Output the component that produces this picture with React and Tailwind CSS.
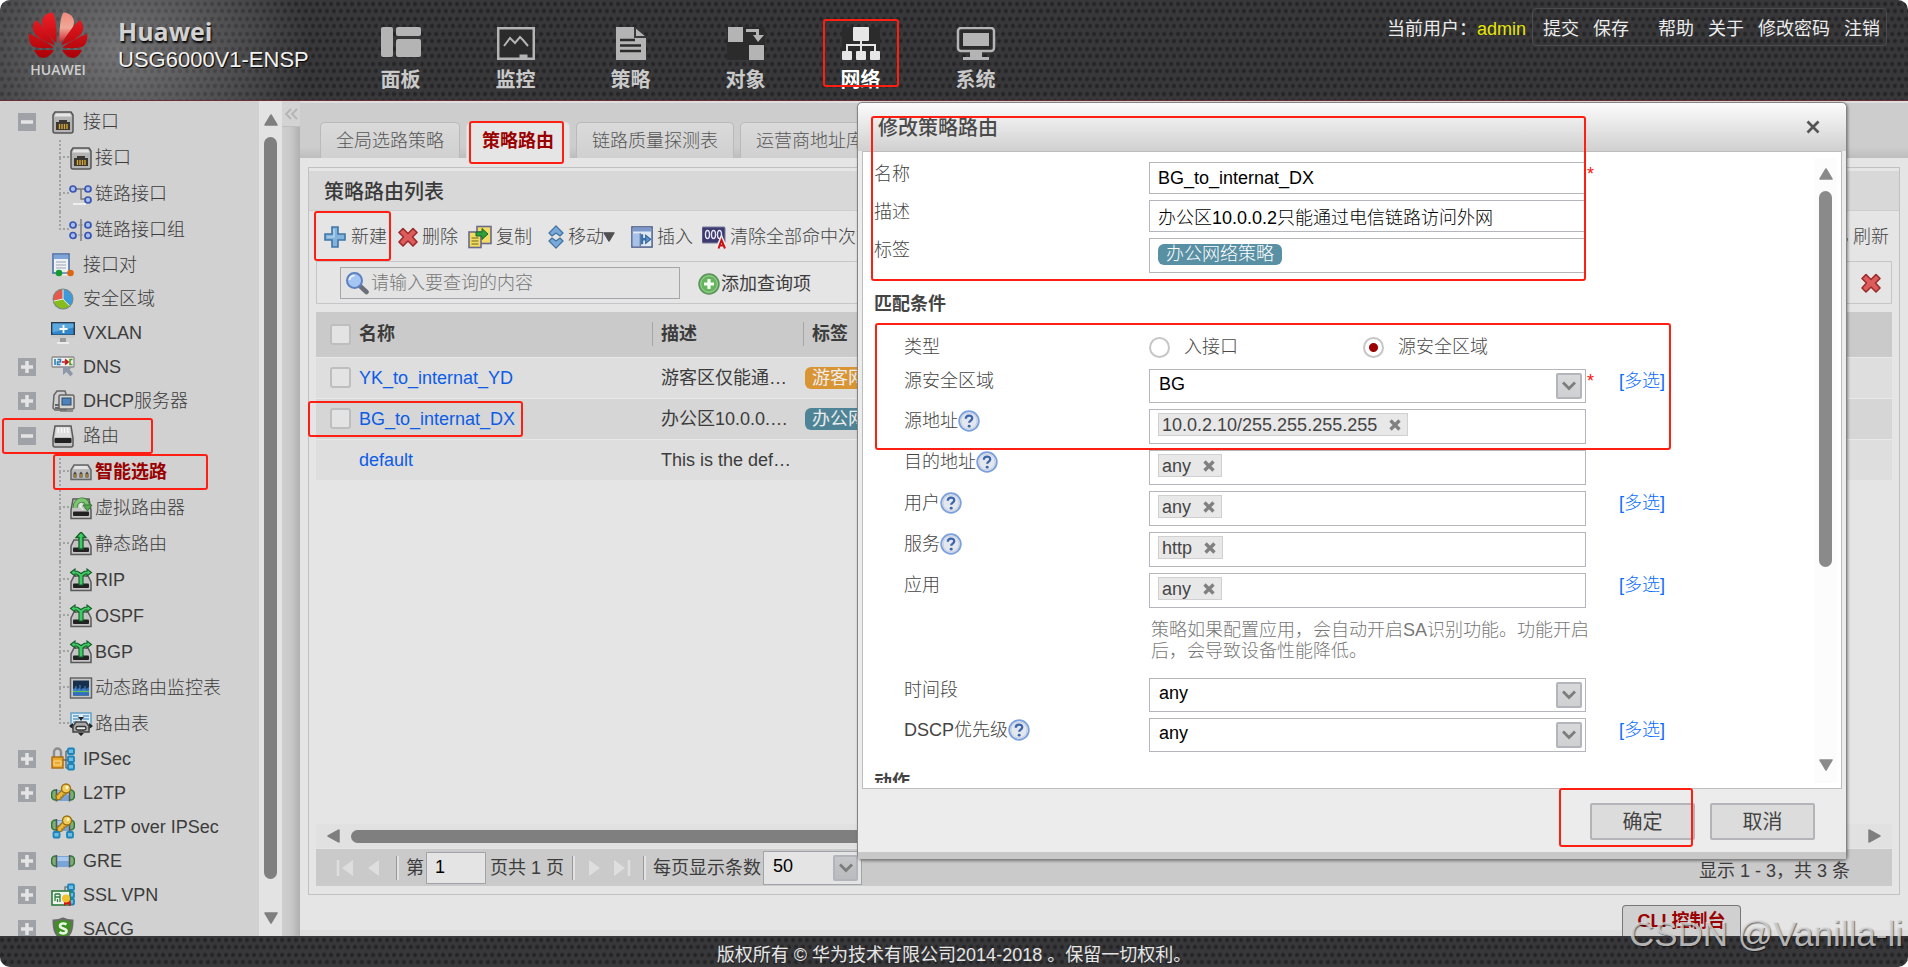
import React from "react";

const DOTS =
  "bg-[radial-gradient(circle_at_2px_4px,#242426_1px,transparent_3px),radial-gradient(circle_at_5px_11px,#242426_1px,transparent_3px)] bg-[size:7px_15px]";

/* ---------- annotation frame ---------- */
const Mark = ({ className }) => (
  <span aria-hidden="true" className={`pointer-events-none absolute z-20 rounded-[3px] border-2 border-[#ff1f12] ${className}`} />
);

/* ---------- tree icons ---------- */
const Svg = ({ children, className = "h-6 w-6", box = "0 0 24 24" }) => (
  <svg viewBox={box} className={`block shrink-0 ${className}`} aria-hidden="true" fill="none">
    {children}
  </svg>
);

const PortIcon = () => (
  <Svg>
    <path d="M4 2h16l2 3v16a2 2 0 0 1-2 2H4a2 2 0 0 1-2-2V5z" fill="#b4b4b4" stroke="#555" strokeWidth="1.5" />
    <path d="M5 3.500h14l1.500 3h-17z" fill="#e6e6e6" />
    <path d="M5 20v-8h3v-2h8v2h3v8z" fill="#3b3733" />
    <path d="M8.500 14v5M11 14v5M13.500 14v5M16 14v5" stroke="#d7a634" strokeWidth="1.400" />
  </Svg>
);
const Node = ({ x, y }) => <circle cx={x} cy={y} r="3" fill="#a9bdf0" stroke="#3a56b0" strokeWidth="1.700" />;
const LinkIcon = () => (
  <Svg>
    <path d="M6 7h12M12 7v10h6" stroke="#777" strokeWidth="1.400" />
    <Node x={4} y={7} /><Node x={19} y={7} /><Node x={19} y={18} />
    <path d="M4 22h13" stroke="#eee" strokeWidth="2" />
  </Svg>
);
const LinkGroupIcon = () => (
  <Svg>
    <path d="M6 7h13M6 17h13" stroke="#999" strokeWidth="1.200" strokeDasharray="2 1" />
    <path d="M12 1v22" stroke="#777" strokeWidth="1.400" />
    <Node x={4} y={7} /><Node x={19} y={7} /><Node x={4} y={17.500} /><Node x={19} y={17.500} />
  </Svg>
);
const PairIcon = () => (
  <Svg>
    <rect x="2" y="1" width="16" height="19" fill="#eef1f6" stroke="#4a70a8" strokeWidth="1.600" />
    <rect x="3" y="2" width="14" height="4" fill="#7fa4d8" />
    <path d="M5 9h10M5 12h10M5 15h10" stroke="#b6bcc6" strokeWidth="1.300" />
    <path d="M9 20h10" stroke="#eee" strokeWidth="5" />
    <path d="M8 20h12" stroke="#5577aa" strokeWidth="1.400" />
    <circle cx="8" cy="20" r="3.300" fill="#149a2e" /><circle cx="19.500" cy="20" r="3.300" fill="#dd6510" />
  </Svg>
);
const PieIcon = () => (
  <Svg>
    <circle cx="12" cy="12" r="10.500" fill="#7a8a80" />
    <path d="M12 12 2.800 14A9.500 9.500 0 0 1 11 2.500z" fill="#e5584a" />
    <path d="M12 12V2.500a9.500 9.500 0 0 1 6.500 16.300z" fill="#3d9adb" />
    <path d="M12 12l6.500 6.800A9.500 9.500 0 0 1 2.800 14z" fill="#86bd1c" />
    <path d="M12 2.500V12l6.500 6.800M12 12l-9.200 2" stroke="#e9efe9" />
  </Svg>
);
const VxlanIcon = () => (
  <Svg>
    <rect x="0" y="1" width="24" height="16" fill="#2b3b4b" />
    <rect x="1.500" y="2.500" width="21" height="11" fill="#2f86c8" />
    <path d="M1.500 2.500h21v4l-21 5z" fill="#5aa8dd" />
    <rect x="0" y="14" width="24" height="3" fill="#c9c9c9" />
    <path d="M9 17h6v4H9z" fill="#9a9a9a" /><path d="M6 22h12" stroke="#ececec" strokeWidth="2" />
    <path d="M12.500 4v8M8.500 8h8" stroke="#fff" strokeWidth="1.800" />
  </Svg>
);
const DnsIcon = () => (
  <Svg>
    <rect x="1" y="2" width="22" height="10" rx="1" fill="#f0f0f0" stroke="#8a8a8a" strokeWidth="1.300" />
    <path d="M4 4v6M6.500 4.500h3v2.500h-3v2.500h3" stroke="#2d7fb5" strokeWidth="1.600" />
    <path d="M11 7h5M14 4.500 17 7l-3 2.500" stroke="#c01818" strokeWidth="1.700" />
    <path d="M21.500 4.500h-2.500v5h2.500" stroke="#4a9e1e" strokeWidth="1.600" />
    <path d="M12 12h9l-2.500 2.500 3.500 4-2.500 3-4-4.500L12 20z" fill="#8f98a8" />
  </Svg>
);
const DhcpIcon = () => (
  <Svg>
    <path d="M3 6 6 2h8l1 3v16H4L2 19z" fill="#cfcfcf" stroke="#666" strokeWidth="1.500" />
    <path d="M4 16h6M4 19h6" stroke="#444" strokeWidth="1.600" />
    <rect x="8" y="6" width="15" height="14" rx="1.500" fill="#d5d5d0" stroke="#666" strokeWidth="1.500" />
    <rect x="11" y="9" width="9" height="7" fill="#4d83ba" stroke="#2c4c70" />
    <path d="M9 22h13" stroke="#777" strokeWidth="1.500" />
  </Svg>
);
const RouterBase = () => (
  <>
    <path d="M5 8h14l3 6v8.500H2V14z" fill="#c4c4c4" stroke="#5a5a5a" strokeWidth="1.500" />
    <rect x="4" y="15.500" width="16" height="4.500" rx="1" fill="#222" />
  </>
);
const RouterIcon = () => (
  <Svg>
    <path d="M4 2h16l2 12v7a2 2 0 0 1-2 2H4a2 2 0 0 1-2-2v-7z" fill="#c2c2c2" stroke="#5a5a5a" strokeWidth="1.500" />
    <path d="M5 3h14l1 10H4z" fill="#dedede" />
    <path d="M7.500 4 7 9M10.500 4v5M13.500 4v5M16.500 4l.5 5" stroke="#f8f8f8" strokeWidth="1.300" />
    <rect x="3.500" y="14" width="17" height="5" rx="1" fill="#222" />
  </Svg>
);
const SmartIcon = () => (
  <Svg>
    <path d="M5 5h14l3 5v9.500H2V10z" fill="#bababa" stroke="#666" strokeWidth="1.500" />
    <path d="M6 6h12l2 3H4z" fill="#e4e4e4" />
    <path d="M4.500 17.500v-4l1.500-2 1.500 2v4zM10.500 17.500v-4l1.500-2 1.500 2v4zM16.500 17.500v-4l1.500-2 1.500 2v4z" fill="#4a443c" />
    <path d="M6 14v3M12 14v3M18 14v3" stroke="#b98d35" strokeWidth="1.500" />
  </Svg>
);
const VirtualIcon = () => (
  <Svg>
    <path d="M4 3h16l2 11v8.500H2V14z" fill="#c4c4c4" stroke="#5a5a5a" strokeWidth="1.500" />
    <rect x="4" y="15.500" width="16" height="4.500" rx="1" fill="#222" />
    <path d="M6 12C6 3 17 1 18.500 9" stroke="#2f7a34" strokeWidth="5" />
    <path d="M6 12C6 3 17 1 18.500 9" stroke="#7cc670" strokeWidth="3.600" />
    <path d="M14 9h9l-4.500 6z" fill="#57ab4d" stroke="#2f7a34" />
    <path d="M11 12V8c3-1 3 2 0 2l3 4" stroke="#f0fff0" />
  </Svg>
);
const StaticIcon = () => (
  <Svg>
    <RouterBase />
    <path d="M12 0l5 5.500h-3V17h-4V5.500H7z" fill="#3ecb63" stroke="#145c28" strokeWidth="1.300" />
  </Svg>
);
const SplitIcon = () => (
  <Svg>
    <RouterBase />
    <path d="M1.500 4.500 6 1v2.200h2.500L12 5.500l3.500-2.300H18V1l4.500 3.500L18 8V6h-1.500L14 8v9h-4V8L7.500 6H6v2z" fill="#3ecb63" stroke="#145c28" strokeWidth="1.100" />
  </Svg>
);
const MonitorTableIcon = () => (
  <Svg>
    <rect x="1.500" y="2" width="21" height="20" fill="#c6c6c6" stroke="#666" strokeWidth="1.500" />
    <rect x="4" y="4.500" width="16" height="15" fill="#17304d" />
    <path d="M4 16v-3l3-2v2l4-1v2l3-2 3 1 3-2v8.500H4z" fill="#2f6fbd" />
    <path d="M4 14h3v-4M9 14h2V9M13 14h3v-4" stroke="#4f88c8" /><path d="M4 15.500h16" stroke="#61c45c" strokeWidth="1.200" />
  </Svg>
);
const RouteTableIcon = () => (
  <Svg>
    <rect x="2" y="1" width="20" height="14" fill="#dcecf6" stroke="#5f9cc4" strokeWidth="1.400" />
    <path d="M4 4h6M4 7h6M14 4h6M14 7h6M4 10h4" stroke="#5f9cc4" strokeWidth="1.400" />
    <path d="M12 9 9 5h6zM12 24l-3-3h6zM0 14l4-3v6zM24 14l-4-3v6z" fill="#222" />
    <path d="M7 10h10l3 4v6H4v-6z" fill="#a9a9a9" stroke="#444" strokeWidth="1.500" />
    <rect x="7" y="14.500" width="10" height="3.500" rx="1.700" fill="#eee" stroke="#333" strokeWidth="1.300" />
  </Svg>
);
const BlueNode = ({ x, y }) => <rect x={x} y={y} width="6" height="5.500" rx="1" fill="#6dbde2" stroke="#1c84b8" strokeWidth="1.800" />;
const IpsecIcon = () => (
  <Svg>
    <path d="M12 13h5M15 4v17M15 4h2M15 21h2" stroke="#666" strokeWidth="1.400" />
    <path d="M3 11V5a3.500 3.500 0 0 1 7 0v6" stroke="#8c8c8c" strokeWidth="2.400" />
    <rect x="1" y="10" width="11" height="11" fill="#eda92f" stroke="#a76c12" strokeWidth="1.400" />
    <path d="M3 14h7v4H3z" stroke="#f8dd95" />
    <BlueNode x={17} y={1.500} /><BlueNode x={17} y={9.500} /><BlueNode x={17} y={17} />
  </Svg>
);
const Tube = () => (
  <>
    <ellipse cx="4" cy="12" rx="3.500" ry="5" fill="#7fae74" stroke="#2c7532" strokeWidth="1.600" />
    <ellipse cx="20" cy="12" rx="3.500" ry="5" fill="#7fae74" stroke="#2c7532" strokeWidth="1.600" />
    <rect x="5" y="7" width="14" height="11" fill="#79a4d8" />
    <rect x="5" y="8" width="14" height="4" fill="#a9c8ec" />
    <path d="M5.500 6v12.500M18.500 6v12.500" stroke="#555" strokeWidth="1.500" />
  </>
);
const Key = () => (
  <>
    <path d="M12 8 5 15l1 4 4-1v-2h2v-2h2l3-3" fill="#e9b93c" stroke="#9a7114" strokeWidth="1.200" />
    <circle cx="15" cy="7.500" r="4.500" fill="#f1cc5c" stroke="#9a7114" strokeWidth="1.400" />
    <circle cx="16" cy="6.500" r="1.400" fill="#fffbe0" />
  </>
);
const L2tpIcon = () => (<Svg><g transform="translate(0 2)"><Tube /></g><Key /></Svg>);
const L2tpOverIcon = () => (
  <Svg>
    <g transform="translate(0 -2)"><Tube /></g>
    <g transform="translate(1 -2)"><Key /></g>
    <BlueNode x={2.500} y={17} /><BlueNode x={16} y={17} />
  </Svg>
);
const GreIcon = () => (<Svg><Tube /></Svg>);
const SslIcon = () => (
  <Svg>
    <path d="M14 8V4h4" stroke="#777" strokeWidth="1.400" />
    <BlueNode x={17} y={1.500} /><BlueNode x={17} y={9} /><BlueNode x={17} y={16} />
    <rect x="1" y="8" width="18" height="14" fill="#eef5ec" stroke="#2e7b3f" strokeWidth="1.600" />
    <path d="M4 11h5M4 14h5M4 11v7M6.500 16v3M9 11v8" stroke="#2e7b3f" strokeWidth="1.300" />
    <path d="M13 17v6l3-2 4 2-1-6z" fill="#d51515" /><circle cx="15" cy="15.500" r="4" fill="#f2c12e" />
  </Svg>
);
const SacgIcon = () => (
  <Svg>
    <path d="M12 1.500c3 1.500 6 2 9.500 2 0 9-1.500 15-9.500 19.500C4 18.500 2.500 12.500 2.500 3.500c3.500 0 6.500-.5 9.500-2z" fill="#3f8f22" stroke="#6a6a6a" strokeWidth="2" />
    <path d="M15.500 7.500c-2-1.500-6.500-1.500-6.500 1.500s6.500 2 6.500 5-5 3-7 1" stroke="#e8f5e2" strokeWidth="2.600" />
  </Svg>
);

/* ---------- toolbar icons ---------- */
const PlusIcon = () => (
  <Svg className="h-6 w-6"><path d="M9 2h6v7h7v6h-7v7H9v-7H2V9h7z" fill="#82b3dc" stroke="#3f76a6" strokeWidth="1.600" /><path d="M11 4v8H4" stroke="#c4def2" strokeWidth="1.200" /></Svg>
);
const CrossIcon = () => (
  <Svg className="h-6 w-5" box="0 0 20 24">
    <path d="M5 3.500 10 8.500l5-5L19 7.500 14.500 12l4.500 5-4 4-5-5-5 5-4-4L5.500 12 1 7.500z" fill="#dc5c5c" stroke="#9c2c2c" strokeWidth="1.600" strokeLinejoin="round" />
  </Svg>
);
const CopyIcon = () => (
  <Svg>
    <rect x="9" y="1.500" width="14" height="17" fill="#f2dc62" stroke="#6a6a8c" strokeWidth="1.600" />
    <rect x="1" y="7" width="12" height="15.500" fill="#f2dc62" stroke="#6a6a8c" strokeWidth="1.600" />
    <path d="M3.500 13h7M3.500 16h7M3.500 19h7" stroke="#9b8a34" strokeWidth="1.300" />
    <path d="M8 7h6V3.500l6 5.500-6 5.500V11H8z" fill="#2f9e3c" stroke="#1b6726" />
  </Svg>
);
const MoveIcon = () => (
  <Svg className="h-6 w-4" box="0 0 16 24">
    <path d="M8 .8 15 8l-3 3-4-3-4 3-3-3zM8 23.200 15 16l-3-3-4 3-4-3-3 3z" fill="#79a9d8" stroke="#40719f" strokeWidth="1.200" strokeLinejoin="round" />
  </Svg>
);
const InsertIcon = () => (
  <Svg className="h-[22px] w-[22px]">
    <rect x="1" y="1" width="22" height="22" fill="#dfe8f3" stroke="#4a5d8a" strokeWidth="1.600" />
    <rect x="2" y="2" width="20" height="4" fill="#7d99cc" /><rect x="2" y="8" width="7" height="14" fill="#a6c2e8" />
    <path d="M10 8v14" stroke="#4a5d8a" strokeWidth="1.300" />
    <path d="M12 9v11M12 14.500h5" stroke="#3a70ac" strokeWidth="2.600" />
    <path d="m16 10 5.500 4.500L16 19z" fill="#5a90cc" stroke="#2f5f96" strokeWidth="1.100" />
  </Svg>
);
const CounterIcon = () => (
  <Svg className="h-6 w-6">
    <rect x="0" y="2" width="23" height="16" rx="1" fill="#3d3a72" stroke="#7b7a9a" />
    <ellipse cx="5.500" cy="9.500" rx="2" ry="4" stroke="#e8e8f4" strokeWidth="1.400" /><ellipse cx="11.500" cy="9.500" rx="2" ry="4" stroke="#e8e8f4" strokeWidth="1.400" /><ellipse cx="17.500" cy="9.500" rx="2" ry="4" stroke="#e8e8f4" strokeWidth="1.400" />
    <path d="M15.500 23.500 19.500 14l4 9.500M17 20.500h5" stroke="#eee" strokeWidth="4" /><path d="M16.500 23.500 19.500 15l3.500 8.500M17.500 20.500h4" stroke="#cc1111" strokeWidth="2" />
  </Svg>
);
const SearchIcon = () => (
  <Svg>
    <path d="m15 15 6.500 6" stroke="#6a6e78" strokeWidth="4.500" strokeLinecap="round" />
    <circle cx="9.500" cy="9.500" r="7.500" fill="#a5c6f4" stroke="#5d80bf" strokeWidth="2" />
    <path d="M4.500 9a5 5 0 0 1 5-4.500" stroke="#e8f2ff" strokeWidth="2" />
  </Svg>
);
const AddCircleIcon = () => (
  <Svg className="h-6 w-6">
    <circle cx="12" cy="12" r="10" fill="#67b35f" stroke="#5c9358" strokeWidth="1.500" />
    <circle cx="12" cy="12" r="8.300" stroke="#9ad394" />
    <path d="M12 7v10M7 12h10" stroke="#f4fff2" strokeWidth="3.200" />
  </Svg>
);
const RefreshIcon = () => (
  <Svg><path d="M20 7a9.500 9.500 0 1 0 1.500 6" stroke="#3f8a5a" strokeWidth="3" /><path d="M22 2v8h-8z" fill="#3f8a5a" /></Svg>
);
const HelpIcon = () => (
  <Svg className="h-[22px] w-[22px]">
    <circle cx="12" cy="12" r="10.700" fill="#e3e7ee" stroke="#7ba0e0" strokeWidth="2" />
    <circle cx="12" cy="12" r="8.700" stroke="#c6cfdd" />
    <path d="M8.500 9.500c0-4.500 7-4.500 7-.5 0 2.500-3.300 2.500-3.300 5" stroke="#3c64ab" strokeWidth="2.500" />
    <circle cx="12.200" cy="17.600" r="1.600" fill="#3c64ab" />
  </Svg>
);
const Tri = ({ d, className, fill = "#7f7f7f" }) => (
  <svg viewBox="0 0 14 12" className={`block shrink-0 ${className}`} aria-hidden="true">
    <path d={d} fill={fill} stroke={fill} strokeWidth="1.500" strokeLinejoin="round" />
  </svg>
);
const UP = "M7 1 13 11H1z";
const DOWN = "M7 11 13 1H1z";

/* ---------- header ---------- */
const petals = [
  "M28.500 31C29 20 28 5 24.500.5 18 1 14 5 14 10c0 7 8 15 14.500 21z",
  "M27 33.500C22 23 14 13 8 8c-4 5-4 10-1 14 4 5 13 9 20 11.500z",
  "M26 35.500C17 29 9 25 1 21.500c-1 6 1 11 4 13 4 2 14 2 21 1z",
  "M26 38H6c2 5 6 8 10 8 4-1 8-4 10-8z",
];
const Logo = () => (
  <svg viewBox="0 0 60 47" className="block h-[47px] w-[60px]" aria-hidden="true">
    <defs>
      <linearGradient id="petal" gradientUnits="userSpaceOnUse" x1="0" y1="0" x2="0" y2="47"><stop offset="0" stopColor="#ee1f26" /><stop offset="1" stopColor="#a80006" /></linearGradient>
      <linearGradient id="shine" x1="0" y1="0" x2="0" y2="1"><stop offset="0" stopColor="#ee8a7c" /><stop offset="0.500" stopColor="#f0a898" /><stop offset="1" stopColor="#cf2026" /></linearGradient>
    </defs>
    <g fill="url(#petal)">{petals.map((d) => <path key={d} d={d} />)}</g>
    <g fill="url(#petal)" transform="translate(60 0) scale(-1 1)">{petals.map((d, i) => <path key={d} d={d} fill={i === 0 ? "url(#shine)" : undefined} />)}</g>
  </svg>
);

const navIcons = {
  面板: <><rect x="0" y="0" width="12" height="30" rx="2" /><rect x="15" y="0" width="25" height="9" rx="2" /><rect x="15" y="12" width="25" height="18" rx="2" /></>,
  监控: <><path d="M1 0h38v33H1z" /><path d="M3.500 2.500h33v28h-5v-3h-8v3h-20z" fill="#2b2b2c" /><path d="m8 19 6-8 5 5 5-6 3 3 5 6" fill="none" stroke="#b4b4b4" strokeWidth="2" /></>,
  策略: <><path d="M5 0h18l12 10v23H5z" /><path d="M24 0v10h11" fill="none" stroke="#3a3a3b" strokeWidth="2" /><path d="M9 13h15M9 18.500h21M9 24h21" stroke="#2b2b2c" strokeWidth="2.500" /></>,
  对象: <><path d="M1 0h38v33H1z" fill="#2b2b2c" /><rect x="2" y="0" width="15" height="15" /><rect x="23" y="18" width="15" height="15" /><path d="M20 2h13v6h5l-6 7-5-7h3V5H20z" /></>,
  网络: <><path d="M1 0h38v33H1z" fill="#2b2b2c" /><g fill="#e6e6e6"><rect x="12" y="0" width="16" height="14" rx="1" /><rect x="1" y="24" width="10" height="9" rx="1" /><rect x="15" y="24" width="10" height="9" rx="1" /><rect x="29" y="24" width="10" height="9" rx="1" /></g><path d="M20 14v11M6 25v-7h28v7" fill="none" stroke="#e6e6e6" strokeWidth="2" /></>,
  系统: <><rect x="2" y="1" width="36" height="23" rx="3" fill="#2b2b2c" stroke="#b4b4b4" strokeWidth="2.500" /><rect x="7" y="6" width="26" height="13" /><path d="M14 25h12v5h7v3H7v-3h7z" /></>,
};

const Header = () => (
  <header className={`flex h-[101px] shrink-0 justify-between border-b border-[#6b2f33] bg-[#38383a] ${DOTS}`}>
    <div className="flex min-w-0 flex-1 bg-[radial-gradient(ellipse_190px_150px_at_120px_50px,rgba(255,255,255,0.3),rgba(255,255,255,0))]">
      <div className="flex w-[343px] shrink-0 gap-[30px] pl-7 pt-3 font-['Open_Sans']">
        <div className="flex flex-col items-center">
          <Logo />
          <span className="mt-1 text-sm leading-[14px] font-semibold text-[#cfcfcf]">HUAWEI</span>
        </div>
        <div className="flex flex-col pt-1">
          <span className="text-[25px] leading-[30px] font-bold text-[#d2d2d2] [text-shadow:1px_2px_2px_#000]">Huawei</span>
          <span className="font-['Liberation_Sans'] text-[22px] leading-7 text-[#f2f2f2] [text-shadow:1px_1px_1px_#000]">USG6000V1-ENSP</span>
        </div>
      </div>
      <nav className="flex pt-[27px]">
        {Object.keys(navIcons).map((name) => (
          <a key={name} href="#" className={`relative flex w-[115px] flex-col items-center gap-2 text-xl leading-6 font-bold ${name === "网络" ? "text-white" : "text-[#c9c9c9]"}`}>
            <svg viewBox="0 0 40 33" className="h-[33px] w-10" fill="#b4b4b4" aria-hidden="true">{navIcons[name]}</svg>
            {name}
            {name === "网络" && <Mark className="-top-2 bottom-[13px] left-5 right-[19px]" />}
          </a>
        ))}
      </nav>
    </div>
    <div className="mt-2 mr-[21px] flex h-[38px] shrink-0 items-center text-lg leading-6 text-[#ececec]">
      <span className="pt-1">当前用户：</span>
      <span className="mr-[6px] pt-1 text-[#e6e600]">admin</span>
      <div className="flex h-full items-center gap-[14px] rounded-[4px] border border-[#4c4c4e] pt-1 pr-[6px] pl-[10px]">
        <a href="#">提交</a>
        <a href="#" className="mr-[15px]">保存</a>
        <a href="#">帮助</a>
        <a href="#">关于</a>
        <a href="#">修改密码</a>
        <a href="#">注销</a>
      </div>
    </div>
  </header>
);

/* ---------- sidebar ---------- */
const tree = [
  { label: "接口", icon: PortIcon, state: "open", children: [["接口", PortIcon], ["链路接口", LinkIcon], ["链路接口组", LinkGroupIcon]] },
  { label: "接口对", icon: PairIcon },
  { label: "安全区域", icon: PieIcon },
  { label: "VXLAN", icon: VxlanIcon },
  { label: "DNS", icon: DnsIcon, state: "closed" },
  { label: "DHCP服务器", icon: DhcpIcon, state: "closed" },
  {
    label: "路由", icon: RouterIcon, state: "open", marked: true,
    children: [["智能选路", SmartIcon], ["虚拟路由器", VirtualIcon], ["静态路由", StaticIcon], ["RIP", SplitIcon], ["OSPF", SplitIcon], ["BGP", SplitIcon], ["动态路由监控表", MonitorTableIcon], ["路由表", RouteTableIcon]],
  },
  { label: "IPSec", icon: IpsecIcon, state: "closed" },
  { label: "L2TP", icon: L2tpIcon, state: "closed" },
  { label: "L2TP over IPSec", icon: L2tpOverIcon },
  { label: "GRE", icon: GreIcon, state: "closed" },
  { label: "SSL VPN", icon: SslIcon, state: "closed" },
  { label: "SACG", icon: SacgIcon, state: "closed" },
];

const Toggle = ({ open, label }) => (
  <button type="button" aria-label={label} className="flex h-[18px] w-[18px] items-center justify-center bg-[#9fa2a6]">
    <svg viewBox="0 0 18 18" className="h-[18px] w-[18px]" aria-hidden="true">
      <path d={open ? "M3 9h12" : "M3 9h12M9 3v12"} stroke="#e4e4e4" strokeWidth="3.500" />
    </svg>
  </button>
);

const Sidebar = () => (
  <aside className="flex shrink-0 bg-[#d1d1d1]">
    <ul className="w-[259px] overflow-hidden pt-[3px] text-lg leading-6 font-light text-[#3c3c3c]">
      {tree.map(({ label, icon: Icon, state, children, marked }) => (
        <li key={label}>
          <div className={`relative flex items-center pl-[18px] ${children ? "h-9" : "h-[34px]"}`}>
            <div className="w-[33px]">{state && <Toggle open={state === "open"} label={label} />}</div>
            <Icon />
            <a href="#" className="ml-2">{label}</a>
            {marked && <Mark className="inset-y-0 left-[2px] w-[151px]" />}
          </div>
          {children && (
            <ul>
              {children.map(([name, ChildIcon], i) => (
                <li key={name} className="relative flex h-9 items-center pl-[59px]">
                  <span className="flex h-full w-[10px] flex-col">
                    <span className="h-1/2 border-b-2 border-l-2 border-dotted border-[#a2a2a2]" />
                    {i < children.length - 1 && <span className="h-1/2 border-l-2 border-dotted border-[#a2a2a2]" />}
                  </span>
                  <ChildIcon />
                  <a href="#" className={name === "智能选路" ? "ml-[2px] font-bold text-[#9a0000]" : "ml-[2px]"}>{name}</a>
                  {name === "智能选路" && <Mark className="inset-y-0 left-[53px] w-[155px]" />}
                </li>
              ))}
            </ul>
          )}
        </li>
      ))}
    </ul>
    <div className="flex w-[23px] flex-col items-center bg-[#e3e3e3] pt-[13px] pb-3">
      <Tri d={UP} className="h-3 w-[14px]" />
      <div className="mt-[11px] mb-[33px] w-[13px] flex-1 rounded-full bg-[#7f7f7f]" />
      <Tri d={DOWN} className="h-3 w-[14px]" />
    </div>
    <div className="w-[18px] bg-gradient-to-r from-[#cfcfcf] via-[#c8c8c8] to-[#b0b0b0]">
      <button type="button" aria-label="收起" className="flex h-[26px] w-full items-center justify-center border-b border-[#bdbdbd] bg-[#d3d3d3]">
        <svg viewBox="0 0 14 12" className="h-3 w-[14px]" fill="none" stroke="#b4b4b4" strokeWidth="1.800" aria-hidden="true"><path d="M7 1 2 6l5 5M13 1 8 6l5 5" /></svg>
      </button>
    </div>
  </aside>
);

/* ---------- list panel ---------- */
const Tool = ({ icon: Icon, children, className = "" }) => (
  <button type="button" className={`flex shrink-0 items-center gap-1 whitespace-nowrap ${className}`}><Icon />{children}</button>
);
const Check = ({ label }) => (
  <input type="checkbox" aria-label={label} className="block h-[21px] w-[21px] shrink-0 appearance-none rounded-[3px] border-2 border-[#bcbec0] bg-[#e3e3e3]" />
);
const rows = [
  { name: "YK_to_internat_YD", desc: "游客区仅能通…", tag: "游客网络策略", tone: "bg-[#d99433]", bg: "bg-[#dedede]", check: true },
  { name: "BG_to_internat_DX", desc: "办公区10.0.0.…", tag: "办公网络策略", tone: "bg-[#4e8495]", bg: "bg-[#d6d6d6]", check: true, marked: true },
  { name: "default", desc: "This is the def…", bg: "bg-[#dedede]" },
];
const Sep = () => <span className="h-6 w-[3px] shrink-0 border-l border-[#9a9a9a] bg-[#e2e2e2]" />;
const ArrowBox = ({ className }) => (
  <span aria-hidden="true" className={`pointer-events-none absolute flex items-center justify-center rounded-[2px] border-2 border-[#b3b5bc] bg-gradient-to-b ${className}`}>
    <svg viewBox="0 0 14 10" className="h-[10px] w-[14px]" fill="none" stroke="#7d7d7d" strokeWidth="2.800"><path d="m1 1.500 6 6 6-6" /></svg>
  </span>
);

const PageButton = ({ label, d, bar, className }) => (
  <button type="button" aria-label={label} disabled className={className}>
    <svg viewBox="0 0 18 18" className="h-[18px] w-[18px]" fill="#dedede" aria-hidden="true"><path d={d} />{bar && <path d={bar} stroke="#dedede" strokeWidth="2.500" />}</svg>
  </button>
);

const ListPanel = () => (
  <section className="mx-2 mt-[9px] flex flex-1 flex-col border border-[#c1c1c3] pt-[3px]">
    <h2 className="flex h-10 shrink-0 items-center border-b border-[#cdcdcd] bg-[#d8d8d8] pt-[2px] pl-[15px] text-xl leading-6 font-medium text-[#3a3a3a]">策略路由列表</h2>
    <div className="flex flex-1 flex-col px-[7px] pb-2">
      <div className="flex h-[50px] shrink-0 items-center pt-[2px] text-lg leading-6 font-light text-[#444]">
        <div className="relative -mt-[2px] flex h-[50px] items-center pt-[2px] pr-[11px] pl-[7px]">
          <Tool icon={PlusIcon}>新建</Tool>
          <Mark className="inset-y-0 -left-[2px] right-[7px]" />
        </div>
        <Tool icon={CrossIcon}>删除</Tool>
        <Tool icon={CopyIcon} className="ml-[10px]">复制</Tool>
        <Tool icon={MoveIcon} className="ml-4">移动</Tool>
        <Tri d={DOWN} className="-ml-px h-[10px] w-3" fill="#505050" />
        <Tool icon={InsertIcon} className="ml-4">插入</Tool>
        <Tool icon={CounterIcon} className="ml-[9px]">清除全部命中次数</Tool>
        <Tool icon={RefreshIcon} className="mr-[3px] ml-auto">刷新</Tool>
      </div>
      <div className="flex h-[43px] shrink-0 items-center border border-[#c6c6c8] pr-[10px] pl-[23px] text-lg leading-6">
        <label className="flex h-8 w-[340px] items-center border border-[#a5a6aa] bg-[#e3e3e3] pl-1">
          <SearchIcon />
          <input type="text" aria-label="查询内容" placeholder="请输入要查询的内容" className="ml-[2px] min-w-0 flex-1 bg-transparent font-light outline-none placeholder:text-[#777]" />
        </label>
        <button type="button" className="ml-[17px] flex items-center pt-[3px] text-[#3c3c3c]"><AddCircleIcon /><span>添加查询项</span></button>
        <button type="button" aria-label="清空" className="ml-auto"><CrossIcon /></button>
      </div>
      <table className="mt-2 w-full table-fixed border-collapse text-lg leading-6 text-[#3c3c3c]">
        <thead>
          <tr className="h-[45px] bg-[#cacaca] text-left">
            <th className="w-[336px] pl-[14px]"><div className="flex items-center gap-2"><Check label="全选" />名称</div></th>
            <th className="w-[151px]"><div className="border-l border-[#a6a6a6] pl-2">描述</div></th>
            <th><div className="border-l border-[#a6a6a6] pl-2">标签</div></th>
          </tr>
        </thead>
        <tbody>
          {rows.map((r) => (
            <tr key={r.name} className={`h-[41px] border-t border-[#e9e9e9] ${r.bg}`}>
              <td className="relative pl-[14px]">
                <div className="flex items-center gap-2">
                  {r.check ? <Check label={r.name} /> : <span className="w-[21px]" />}
                  <a href="#" className="text-[#0c5ce6]">{r.name}</a>
                </div>
                {r.marked && <Mark className="inset-y-[2px] -left-2 w-[215px]" />}
              </td>
              <td className="pl-[9px] whitespace-nowrap">{r.desc}</td>
              <td className="pl-[2px]">{r.tag && <span className={`inline-block rounded-[6px] px-[7px] text-lg leading-[22px] whitespace-nowrap text-[#ededed] ${r.tone}`}>{r.tag}</span>}</td>
            </tr>
          ))}
        </tbody>
      </table>
      <div className="flex-1" />
      <div className="flex h-6 shrink-0 items-center bg-[#e1e1e1] px-[11px]">
        <Tri d="M1 6 12 0v12z" className="h-[14px] w-[14px]" />
        <div className="mr-[300px] ml-[10px] h-[13px] flex-1 rounded-full bg-[#7f7f7f]" />
        <Tri d="M13 6 2 0v12z" className="h-[14px] w-[14px]" />
      </div>
      <div className="mt-px flex h-[37px] shrink-0 items-center bg-[#cacaca] text-lg leading-6 text-[#3c3c3c]">
        <PageButton label="首页" d="M17 1v16L6 9z" bar="M2 1v16" className="ml-5" />
        <PageButton label="上一页" d="M13 1v16L2 9z" className="ml-3" />
        <span className="ml-3 flex"><Sep /></span>
        <label htmlFor="page" className="ml-[7px]">第</label>
        <input id="page" defaultValue="1" className="mr-1 ml-[2px] h-8 w-[60px] border border-[#a2a3a8] bg-[#e4e4e4] pl-[8px] text-black outline-none" />
        <span className="mr-2">页共 1 页</span>
        <Sep />
        <PageButton label="下一页" d="M2 1v16L13 9z" className="ml-3" />
        <PageButton label="末页" d="M1 1v16L12 9z" bar="M16 1v16" className="ml-2" />
        <span className="mr-[7px] ml-[12px] flex"><Sep /></span>
        <label htmlFor="size">每页显示条数</label>
        <span className="relative ml-[2px]">
          <select id="size" className="block h-[34px] w-[99px] appearance-none border border-[#a2a3a8] bg-[#e4e4e4] pb-1 pl-[9px] text-black outline-none"><option>50</option></select>
          <ArrowBox className="inset-y-1 right-1 w-[25px] from-[#c6c7c9] to-[#babbbd]" />
        </span>
        <span className="mr-[42px] ml-auto pt-[6px]">显示 1 - 3，共 3 条</span>
      </div>
    </div>
  </section>
);

const tabs = ["全局选路策略", "策略路由", "链路质量探测表", "运营商地址库"];

/* ---------- dialog ---------- */
const Row = ({ label, id, help, indent = true, children, star, multi }) => (
  <div className="flex shrink-0 items-start">
    <div className={`flex shrink-0 items-center ${indent ? "w-[245px]" : "-ml-[30px] w-[275px]"}`}>
      <label htmlFor={id}>{label}</label>
      {help && <button type="button" aria-label={`${label}帮助`}><HelpIcon /></button>}
    </div>
    <div className="w-[437px] shrink-0 text-black">{children}</div>
    <span className="w-[33px] shrink-0 pl-[1px] text-[#ff1010]">{star && "*"}</span>
    {multi && <a href="#" className="text-[#0a6cff]">[多选]</a>}
  </div>
);
const Chips = ({ id, value, tag }) => (
  <div className="flex h-[35px] items-start border border-[#b5b6bd] bg-white pl-2">
    {tag ? (
      <span className="mt-[5px] rounded-[6px] bg-[#5990a4] px-2 leading-[21px] text-white">{value}</span>
    ) : (
      <span className="mt-[3px] flex h-[23px] items-center border border-[#d0d0d0] bg-[#e8e8e8] pr-[6px] pl-[3px] text-[#444]">
        {value}
        <button type="button" aria-label={`删除 ${value}`} className="ml-3">
          <svg viewBox="0 0 12 12" className="h-3 w-3" aria-hidden="true"><path d="m1.500 1.500 9 9M10.500 1.500l-9 9" stroke="#808080" strokeWidth="3.300" /></svg>
        </button>
      </span>
    )}
    <input id={id} className="h-full min-w-0 flex-1 bg-transparent outline-none" />
  </div>
);
const Pick = ({ id, value }) => (
  <div className="relative">
    <select id={id} className="block h-[34px] w-full appearance-none border border-[#b5b6bd] bg-white pb-1 pl-[9px] outline-none"><option>{value}</option></select>
    <ArrowBox className="inset-y-1 right-1 w-[26px] from-[#d8d9db] to-[#cfd0d2]" />
  </div>
);
const Radio = ({ children, checked, className }) => (
  <label className={`flex items-center gap-[14px] ${className}`}>
    <input type="radio" name="kind" defaultChecked={checked} className="h-[21px] w-[21px] appearance-none rounded-full border-2 border-[#c6c6c6] bg-white checked:bg-[radial-gradient(circle,#9c0000_4px,transparent_5px)]" />
    <span className="text-[#4a4a4a]">{children}</span>
  </label>
);

const Dialog = () => (
  <div role="dialog" aria-labelledby="dlg-title" className="absolute top-[102px] right-[61px] z-10 flex h-[758px] w-[990px] flex-col rounded-[5px] border border-[#858585] bg-[#ececec] text-lg leading-6 text-[#444] shadow-[1px_1px_3px_rgba(0,0,0,0.4)]">
    <Mark className="top-[13px] left-[13px] h-[165px] w-[715px]" />
    <div className="flex h-12 shrink-0 items-center justify-between rounded-t-[5px] bg-gradient-to-b from-[#fcfcfc] to-[#d0d0d0] pr-[26px] pl-[20px]">
      <h3 id="dlg-title" className="pt-[2px] text-xl leading-6 font-medium text-[#4a4a4a]">修改策略路由</h3>
      <button type="button" aria-label="关闭">
        <svg viewBox="0 0 14 14" className="h-[14px] w-[14px]" aria-hidden="true"><path d="m1.500 1.500 11 11M12.500 1.500l-11 11" stroke="#555" strokeWidth="2.700" /></svg>
      </button>
    </div>
    <div className="mx-1 flex min-h-0 flex-1 border border-[#bdbdbd] bg-white pr-1 pb-[5px]">
      <div className="relative flex min-w-0 flex-1 flex-col gap-[6px] overflow-hidden pt-[10px] pl-[41px] font-light">
        <Mark className="top-[171px] left-[12px] h-[127px] w-[796px]" />
        <Row label="名称" id="f-name" indent={false} star><input id="f-name" defaultValue="BG_to_internat_DX" className="block h-8 w-full border border-[#b5b6bd] bg-white pl-2 outline-none" /></Row>
        <Row label="描述" id="f-desc" indent={false}><input id="f-desc" defaultValue="办公区10.0.0.2只能通过电信链路访问外网" className="block h-8 w-full border border-[#b5b6bd] bg-white pl-2 outline-none" /></Row>
        <Row label="标签" id="f-tag" indent={false}><Chips id="f-tag" value="办公网络策略" tag /></Row>
        <h4 className="mt-[13px] -ml-[30px] shrink-0 font-bold text-[#444]">匹配条件</h4>
        <div className="mt-[13px] flex h-7 shrink-0 items-start">
          <span className="w-[245px]">类型</span>
          <Radio className="w-[214px]">入接口</Radio>
          <Radio checked>源安全区域</Radio>
        </div>
        <Row label="源安全区域" id="f-zone" star multi><Pick id="f-zone" value="BG" /></Row>
        <Row label="源地址" id="f-src" help><Chips id="f-src" value="10.0.2.10/255.255.255.255" /></Row>
        <Row label="目的地址" id="f-dst" help><Chips id="f-dst" value="any" /></Row>
        <Row label="用户" id="f-user" help multi><Chips id="f-user" value="any" /></Row>
        <Row label="服务" id="f-svc" help><Chips id="f-svc" value="http" /></Row>
        <Row label="应用" id="f-app" multi><Chips id="f-app" value="any" /></Row>
        <p className="mt-[6px] mb-[10px] ml-[247px] w-[440px] shrink-0 leading-[21px] text-[#777]">策略如果配置应用，会自动开启SA识别功能。功能开启后，会导致设备性能降低。</p>
        <Row label="时间段" id="f-time"><Pick id="f-time" value="any" /></Row>
        <Row label="DSCP优先级" id="f-dscp" help multi><Pick id="f-dscp" value="any" /></Row>
        <h4 className="mt-[12px] -ml-[30px] shrink-0 font-bold text-[#444]">动作</h4>
      </div>
      <div className="mt-[6px] flex w-[23px] shrink-0 flex-col items-center bg-[#fcfcfc] pt-[10px] pb-[12px]">
        <Tri d={UP} className="h-3 w-[14px]" fill="#8a8a8a" />
        <div className="mt-[11px] h-[376px] w-[13px] rounded-full bg-[#8a8a8a]" />
        <Tri d={DOWN} className="mt-auto h-3 w-[14px]" fill="#8a8a8a" />
      </div>
    </div>
    <div className="relative flex h-[70px] shrink-0 justify-end gap-[15px] border-b-[7px] border-[#c8c8c8] pt-[14px] pr-[31px]">
      <button type="button" className="h-[37px] w-[105px] rounded-[2px] border-2 border-[#b3b3b8] bg-[#dcdcdc] text-xl leading-6">确定</button>
      <button type="button" className="h-[37px] w-[105px] rounded-[2px] border-2 border-[#b3b3b8] bg-[#dcdcdc] text-xl leading-6">取消</button>
      <Mark className="-top-px right-[153px] h-[59px] w-[134px]" />
    </div>
  </div>
);

export default function App() {
  return (
    <div className="relative flex h-screen flex-col overflow-hidden rounded-[10px] bg-[#e5e5e5] font-['Liberation_Sans','Noto_Sans_CJK_SC',sans-serif]">
      <Header />
      <div className="flex min-h-0 flex-1">
        <Sidebar />
        <main className="flex min-w-0 flex-1 flex-col bg-[#e5e5e5]">
          <div className="flex h-[57px] shrink-0 items-end gap-[6px] border-t-2 border-[#dedede] bg-gradient-to-b from-[#cdcdcd] from-80% to-[#bdbdbd] pl-5 text-lg leading-6 font-light text-[#555]">
            {tabs.map((t) => (
              <a key={t} href="#" className={`relative flex h-9 shrink-0 items-center rounded-t-[5px] border border-b-0 px-[15px] ${t === "策略路由" ? "border-[#dcdcdc] bg-[#e5e5e5] font-bold text-[#9a0000]" : "border-[#bababa] bg-gradient-to-b from-[#dadada] to-[#d0d0d0]"}`}>
                {t}
                {t === "策略路由" && <Mark className="-top-[2px] -bottom-[6px] left-[2px] right-[5px]" />}
              </a>
            ))}
          </div>
          <ListPanel />
          <div className="flex h-[41px] shrink-0 items-end justify-end border-b-[6px] border-[#dedede] pr-[167px]">
            <button type="button" className="-mb-[6px] flex h-[31px] w-[119px] items-center justify-center rounded-t-[4px] border border-b-0 border-[#777] bg-[#d0d0d0] text-lg leading-6 font-bold text-[#9a0000]">CLI 控制台</button>
          </div>
        </main>
      </div>
      <footer className={`flex h-[31px] shrink-0 items-center justify-center bg-[#38383a] pt-[7px] text-lg leading-6 text-[#e6e6e6] ${DOTS}`}>
        版权所有 © 华为技术有限公司2014-2018 。保留一切权利。
      </footer>
      <Dialog />
      <span className="pointer-events-none absolute right-[5px] bottom-[13px] z-30 text-[35px] leading-10 text-[#dcdcdc]/80 [text-shadow:1px_1px_1px_rgba(0,0,0,0.5)]">CSDN @Vanilla-li</span>
    </div>
  );
}
